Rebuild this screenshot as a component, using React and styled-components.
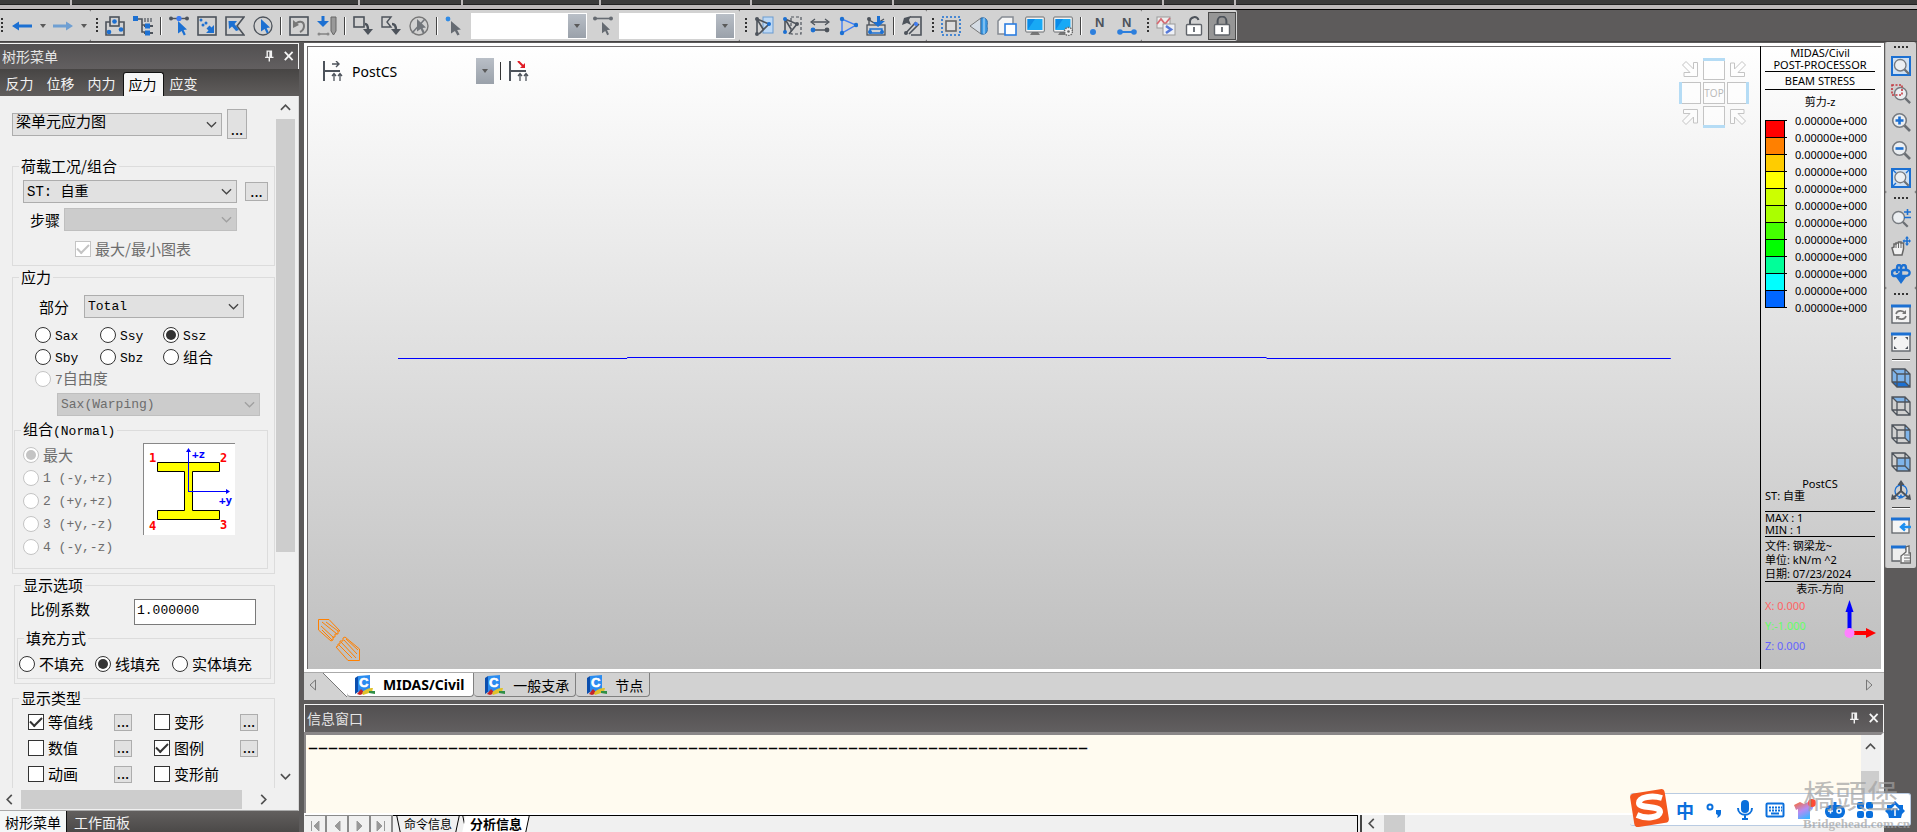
import { useState } from "react"
import styled, { createGlobalStyle } from "styled-components"

const GREY = "#4d535b"
const BLUE = "#1c70d2"
const SKY = "#7fb4ea"

const line = { fill: "none", stroke: GREY, strokeWidth: 1.6 }
const blueLine = { fill: "none", stroke: BLUE, strokeWidth: 1.6 }
const CURSOR = "M0 0L9 8.5L5.6 9L7.8 13.6L5.8 14.6L3.6 10L0 12.4Z"

const Magnifier = ({ children }) => (
  <>
    <path d="M13 13L19 19" stroke="#6b6f74" strokeWidth="2.6" />
    <circle cx="8.5" cy="8.5" r="6.8" fill="#eceff2" stroke="#777b80" strokeWidth="1.6" />
    {children}
  </>
)

const Cube = ({ children }) => (
  <>
    {children}
    <path d="M1 1H14L19 6V19H6L1 14ZM1 1L6 6M6 6H19M6 6V19M14 1V14H1M14 14L19 19" {...line} strokeWidth="1.3" />
  </>
)

const Monitor = () => (
  <>
    <path d="M7 16H13L15 19H5Z" fill="#777" />
    <rect x="0.7" y="1" width="18.6" height="15" rx="1" fill="#f4f4f4" stroke="#6a6d70" />
    <rect x="2.5" y="3" width="15" height="11" fill="#18a9f5" />
    <path d="M2.5 14V3H10Z" fill="#0b8be8" />
  </>
)

const Lock = ({ open }) => (
  <>
    <path d={open ? "M6 9V5A4.4 4.4 0 0 1 14.5 4" : "M5.6 9V5A4.4 4.4 0 0 1 14.4 5V9"} {...line} strokeWidth="2" />
    <rect x="2.5" y="8.5" width="15" height="10.5" rx="1" fill="#fff" stroke="#60646a" strokeWidth="1.4" />
    <path d="M10 11V16" stroke={GREY} strokeWidth="1.6" />
  </>
)

const Nodes = ({ dots, r = 2 }) => dots.map(([x, y, color = BLUE]) => (
  <circle key={`${x}-${y}`} cx={x} cy={y} r={r} fill={color} />
))

const ICONS = {
  back: <path d="M0 10L7 5.5V8.6H20V11.4H7V14.5Z" fill={BLUE} />,
  forward: <path d="M20 10L13 5.5V8.6H0V11.4H13V14.5Z" fill="#6f9fd2" />,
  group: (
    <>
      <path d="M5 6H1V19H19V6H14" {...line} />
      <rect x="5" y="1" width="9" height="9" {...line} />
      <Nodes dots={[[9.5, 5.5], [4, 16], [16, 13.5]]} r={2.3} />
    </>
  ),
  tree: (
    <>
      <path d="M3 3H9V16H13M9 9H13" {...line} />
      <rect width="5" height="5" fill={BLUE} />
      <path d="M12 2V6M15 2V6M18 2V6" stroke={GREY} strokeWidth="1.2" />
      <path d="M11 10H20M11 17H20" stroke={GREY} strokeWidth="2" />
      <rect x="12" y="7.5" width="5" height="5" fill={BLUE} />
      <rect x="12" y="14.5" width="5" height="5" fill={BLUE} />
    </>
  ),
  selectNode: (
    <>
      <path d="M2 2.5H18" stroke={GREY} strokeWidth="1.4" />
      <Nodes dots={[[2, 2.5, GREY], [18, 2.5, GREY]]} />
      <circle cx="10" cy="2.5" r="2.6" fill="#3c7cf5" />
      <path d={CURSOR} transform="translate(9 5)" fill={BLUE} />
    </>
  ),
  selectWindow: (
    <>
      <rect x="1" y="1" width="18" height="18" {...line} />
      <Nodes dots={[[4, 4], [9, 7], [6, 9]]} r={1.5} />
      <path d="M17 17H9L11.5 14.5L9.5 12.5L12.5 9.5L14.5 11.5L17 9Z" fill={BLUE} />
    </>
  ),
  selectPolygon: (
    <>
      <path d="M19 1H1V19H19L12 10Z" {...line} />
      <path d="M3.5 5H12L9.5 8L14 14L11 15L7 10.5L4 13Z" fill={BLUE} />
    </>
  ),
  selectCircle: (
    <>
      <circle cx="10" cy="10" r="9" {...line} strokeWidth="1.3" />
      <path d={CURSOR} transform="translate(8 3)" fill={BLUE} />
    </>
  ),
  undoSelect: (
    <>
      <rect x="1" y="1" width="18" height="18" {...line} />
      <path d="M6 9C9 4 15 5 15 10C15 13 13 15 11 16" {...line} stroke="#777" strokeWidth="2" />
      <path d="M4 4L4 12L10 9Z" fill="#777" />
    </>
  ),
  recallSelect: (
    <>
      <path d="M6 0V7" stroke={BLUE} strokeWidth="3" />
      <path d="M0 5H12L6 11Z" fill={BLUE} />
      <path d="M2 18H11" stroke="#888" strokeWidth="1.6" />
      <Nodes dots={[[2, 18, "#888"], [11, 18, "#888"]]} r={1.5} />
      <path d="M14 1H19V15L16.5 19L14 15Z" fill="#999" stroke="#666" />
    </>
  ),
  unselectWindow: (
    <>
      <rect x="1" y="1" width="10" height="10" {...line} />
      <path d="M12 8C15 8 15 11 15 14" {...line} strokeWidth="2.4" />
      <path d="M10 13H20L15 19Z" fill={GREY} />
    </>
  ),
  unselectPolygon: (
    <>
      <path d="M10 1H1V11H10L6 6Z" {...line} strokeWidth="1.4" />
      <path d="M11 8C14 8 15 10 15 14" {...line} strokeWidth="2.4" />
      <path d="M10 13H20L15 19Z" fill={GREY} />
    </>
  ),
  unselectAll: (
    <>
      <circle cx="10" cy="10" r="9" {...line} stroke="#777" strokeWidth="1.4" />
      <path d={CURSOR} transform="translate(8 3)" fill="#72767b" />
      <path d="M3 17L16 3" stroke="#72767b" strokeWidth="1.6" />
    </>
  ),
  pickNode: (
    <>
      <circle cx="3" cy="3" r="2.4" fill="#2f8be6" />
      <path d={CURSOR} transform="translate(6 5) scale(1.1 1)" fill="#666b72" />
    </>
  ),
  pickElement: (
    <>
      <path d="M2 2.5H18" stroke="#666b72" strokeWidth="1.6" />
      <Nodes dots={[[2, 2.5, "#666b72"], [18, 2.5, "#666b72"]]} />
      <path d={CURSOR} transform="translate(9 6) scale(.9)" fill="#666b72" />
    </>
  ),
  activate: (
    <>
      <rect x="9" y="1" width="10" height="16" fill="#bcd8f5" stroke="#6a9bd0" />
      <path d="M3 18V3L15 8L5 18M3 3L9 13" {...line} />
      <Nodes dots={[[3, 3, GREY], [3, 18, GREY], [15, 8]]} />
    </>
  ),
  inactivate: (
    <>
      <rect x="9" y="1" width="10" height="17" {...line} strokeWidth="1.2" strokeDasharray="3 2" />
      <path d="M3 16V3L15 8L7 18M3 3L9 13" {...line} />
      <Nodes dots={[[3, 3], [3, 16], [15, 8, GREY]]} />
    </>
  ),
  swap: (
    <>
      <path d="M2 6H18M2 14H18" {...line} />
      <path d="M15 3L19 6L15 9M5 3L1 6L5 9" {...line} strokeWidth="1.2" />
      <Nodes dots={[[3, 14], [17, 14, GREY]]} r={2.4} />
    </>
  ),
  activateAll: (
    <>
      <path d="M4 3V17L18 9Z" {...blueLine} stroke="#3e7df5" strokeWidth="1.4" />
      <Nodes dots={[[4, 3], [4, 17], [18, 9]]} r={2.2} />
    </>
  ),
  activateStory: (
    <>
      <rect x="1" y="9" width="18" height="10" {...line} strokeWidth="1.3" />
      <path d="M3 9V4L10 8L18 3" {...line} strokeWidth="1.4" />
      <path d="M4 13V17H16V13Z" {...blueLine} strokeWidth="1.4" />
      <path d="M11 0H14V5H19L12 11L7 6H11Z" fill={BLUE} />
      <Nodes dots={[[3, 3, GREY], [4, 16], [16, 16]]} />
    </>
  ),
  previous: (
    <>
      <path d="M8 1H19V19H9" {...line} />
      <path d="M3 18L14 6M7 18L17 8" {...line} />
      <path d="M0 9L2 2L9 0L7 4L9 9L5 7Z" fill={GREY} />
      <Nodes dots={[[4, 17, GREY], [14, 8, "#3e7df5"]]} />
    </>
  ),
  shrink: (
    <>
      <rect x="1" y="1" width="18" height="18" {...blueLine} strokeDasharray="2 2" />
      <rect x="5" y="5" width="10" height="10" fill="#ddd" stroke="#666" strokeWidth="1.6" />
    </>
  ),
  perspective: (
    <>
      <path d="M1 10L12 2V18Z" fill="#d5dce4" stroke="#777" />
      <path d="M12 2C18 1 19 5 18 10C19 15 18 19 12 18Z" fill="#3b9be6" stroke="#2e6ca8" />
      <path d="M15 2V18" stroke="#bfe0fb" />
    </>
  ),
  hidden: (
    <>
      <path d="M1 5L5 1H16V14L13 18H1Z" fill="#f5f5f5" stroke="#858b92" strokeWidth="1.5" />
      <rect x="8" y="8" width="11" height="11" fill="#fff" stroke="#2c7de0" strokeWidth="1.6" />
    </>
  ),
  display: <Monitor />,
  displayOption: (
    <>
      <Monitor />
      <circle cx="15.5" cy="15.5" r="4" fill="#eee" stroke="#666" strokeWidth="1.5" strokeDasharray="1.5 1" />
      <circle cx="15.5" cy="15.5" r="1.3" fill="#666" />
    </>
  ),
  nodeNumber: (
    <>
      <text x="6" y="11" fontSize="13" fontWeight="bold" fontFamily="Liberation Sans" fill={GREY}>N</text>
      <circle cx="4" cy="16" r="3" fill="#2d7fdd" />
    </>
  ),
  elementNumber: (
    <>
      <text x="5" y="11" fontSize="13" fontWeight="bold" fontFamily="Liberation Sans" fill={GREY}>N</text>
      <path d="M3 16H17" stroke="#2d7fdd" strokeWidth="2" />
      <Nodes dots={[[3, 16, "#2d7fdd"], [17, 16, "#2d7fdd"]]} r={2.8} />
    </>
  ),
  resultMode: (
    <>
      <rect x="1" y="1" width="13" height="11" fill="#eee" stroke="#999" />
      <path d="M1 8L5 3L9 8L14 2" fill="none" stroke="#d66a72" strokeWidth="1.8" />
      <rect x="7" y="8" width="12" height="11" fill="#eef0f6" stroke="#999" />
      <path d="M10 10L15 13.5L10 17" fill="none" stroke="#5679d8" strokeWidth="2.6" />
    </>
  ),
  unlock: <Lock open />,
  lock: <Lock />,
  zoomFit: (
    <>
      <rect x="1" y="1" width="18" height="18" fill="#cfe0f2" stroke={BLUE} strokeWidth="2" />
      <g transform="translate(2 2) scale(.85)"><Magnifier /></g>
    </>
  ),
  zoomWindow: (
    <>
      <g transform="translate(2 2) scale(.9)"><Magnifier /></g>
      <rect x="1" y="1" width="10" height="10" fill="none" stroke="#c33a40" strokeWidth="1.6" strokeDasharray="2 1.5" />
    </>
  ),
  zoomIn: <Magnifier><path d="M4.5 8.5H12.5M8.5 4.5V12.5" stroke={BLUE} strokeWidth="2.6" /></Magnifier>,
  zoomOut: <Magnifier><path d="M4.5 8.5H12.5" stroke={BLUE} strokeWidth="2.6" /></Magnifier>,
  zoomAuto: (
    <>
      <rect x="1" y="1" width="18" height="18" fill="#cfe0f2" stroke={BLUE} strokeWidth="2" />
      <path d="M2 2L5 5M18 2L15 5M2 18L5 15" stroke={BLUE} strokeWidth="1.4" />
      <g transform="translate(2.5 2.5) scale(.8)"><Magnifier /></g>
    </>
  ),
  zoomDynamic: (
    <>
      <g transform="translate(0 2) scale(.88)"><Magnifier /></g>
      <path d="M13 4H20M16.5 1V7M13 9.5H20" stroke={BLUE} strokeWidth="1.6" />
    </>
  ),
  pan: (
    <>
      <path d="M3 19L1 12L3 11V8H5V7H7.5V6H10V7H12.5V13L11 19Z" fill="#f2f2f2" stroke="#666" strokeWidth="1.5" />
      <path d="M5 8V12M7.5 7V12M10 7V12" stroke="#666" />
      <path d="M16 0L18 2.5H16.8V4.2H18V3L20 5L18 7V5.8H16.8V7.5H18L16 10L14 7.5H15.2V5.8H13.5V7L11.5 5L13.5 3V4.2H15.2V2.5H14Z" fill={BLUE} />
    </>
  ),
  rotate: (
    <>
      <path d="M3 6H15C20 6 20 12 14 12H8M6 12H4C0 12 0 6 4 6" {...blueLine} strokeWidth="2.4" />
      <path d="M6 9V4C6 0 10 0 10 4V14M10 4C11 0 15 0 15 4V7" {...blueLine} strokeWidth="2.4" />
      <path d="M5 13H15L10 20ZM9 8V16L4 12Z" fill={BLUE} />
    </>
  ),
  redraw: (
    <>
      <rect x="1" y="2" width="18" height="17" fill="#f3f3f3" stroke="#62666b" strokeWidth="1.4" />
      <path d="M0 2H20" stroke={BLUE} strokeWidth="3" />
      <path d="M5 10C6 6 12 6 14 9M15 12C14 16 8 16 6 13" {...line} stroke="#777" />
      <path d="M15 6V10H11ZM5 16V12H9Z" fill="#777" />
    </>
  ),
  initialView: (
    <>
      <rect x="1" y="2" width="18" height="17" fill="#f3f3f3" stroke="#62666b" strokeWidth="1.4" />
      <path d="M0 2H20" stroke={BLUE} strokeWidth="3" />
      <path d="M3 5H6L3 8ZM14 5H17V8ZM3 14V17H6ZM17 14V17H14Z" fill={GREY} />
    </>
  ),
  iso: <Cube><path d="M1 1H14L19 6V19H6L1 14Z" fill={SKY} /><path d="M1 14L6 19H19L14 14Z" fill={BLUE} /></Cube>,
  top: <Cube><path d="M1 1H14L19 6H6Z" fill={SKY} /></Cube>,
  right: <Cube><path d="M14 1L19 6V19L14 14Z" fill={SKY} /></Cube>,
  front: <Cube><rect x="6" y="6" width="13" height="13" fill={SKY} /></Cube>,
  angle: (
    <>
      <circle cx="10" cy="11" r="6" {...blueLine} strokeWidth="1.3" />
      <path d="M10 2V11L2 18M10 11L18 18" {...line} strokeWidth="2" />
      <path d="M6.5 5L10 0L13.5 5ZM0 20L1 14L6 19ZM20 20L19 14L14 19Z" fill={GREY} />
      <path d="M7 19L10 14L12 18Z" fill={BLUE} />
    </>
  ),
  dockWindow: (
    <>
      <rect x="1" y="3" width="17" height="14" fill="#f5f5f5" stroke="#62666b" strokeWidth="1.3" />
      <path d="M0 3H19" stroke={BLUE} strokeWidth="3" />
      <path d="M20 11H11M14 7.5L10 11L14 14.5" fill="none" stroke="#1c8ff0" strokeWidth="2.4" />
    </>
  ),
  handWindow: (
    <>
      <path d="M9 17H1V3H15V6" fill="#eee" stroke="#62666b" strokeWidth="1.3" />
      <path d="M0 3H15" stroke={BLUE} strokeWidth="3" />
      <path d="M10 19V12L15 8V3L18 2V9H19.5V19Z" fill="#f5f5f5" stroke="#666" strokeWidth="1.3" />
      <path d="M13 11H19M13 14H19M13 17H19" stroke="#666" />
    </>
  ),
  stage: (
    <>
      <path d="M1 0V20M1 10H17" {...line} strokeWidth="2" />
      <path d="M9 3H16M13 0L16 3L13 6" {...line} strokeWidth="1.4" />
      <path d="M11 13V20M17 13V20M9 15L11 12.5L13 15M15 15L17 12.5L19 15" {...line} strokeWidth="1.3" />
    </>
  ),
  stageAlt: (
    <>
      <path d="M1 0V20M1 10H17" {...line} strokeWidth="2" />
      <path d="M9 0L15 6" stroke="#e01b24" strokeWidth="2" />
      <path d="M16 2V7H11Z" fill="#e01b24" />
      <path d="M11 13V20M17 13V20M9 15L11 12.5L13 15M15 15L17 12.5L19 15" {...line} strokeWidth="1.3" />
    </>
  ),
  civil: (
    <>
      <path d="M3 1L15 0V15L3 17Z" fill="#2b8cf0" />
      <path d="M3 1V17L0 19V3Z" fill="#0b4fae" />
      <text x="4" y="12" fontSize="13" fontWeight="bold" fontFamily="Liberation Sans" fill="#fff" stroke="#fff" strokeWidth=".6">C</text>
      <path d="M2 19L6 14L10 18L5 20Z" fill="#c5242a" />
      <path d="M7 18C10 14 14 13 18 13L17 17L8 20Z" fill="#e0c22c" />
      <path d="M14 16L20 16V19L14 18Z" fill="#2f8f46" />
    </>
  ),
  pin: <path d="M5 2H13V11H15V13H10V18H8V13H3V11H5ZM7 4V11H9V4Z" fill="#f2f2f2" fillRule="evenodd" />,
  close: <path d="M3 3L16 17M16 3L3 17" stroke="#f4f4f4" strokeWidth="3" />,
}

const Icon = ({ name, size = 20 }) => (
  <svg width={size} height={size} viewBox="0 0 20 20" aria-hidden="true">{ICONS[name]}</svg>
)

const Chevron = ({ dir = "down", color = "#505050", size = 11, weight = 1.8 }) => {
  const turn = { down: 0, left: 90, up: 180, right: 270 }[dir]
  return (
    <svg width={size} height={size} viewBox="0 0 12 12" aria-hidden="true">
      <path d="M1 3.5L6 8.5L11 3.5" fill="none" stroke={color} strokeWidth={weight} transform={`rotate(${turn} 6 6)`} />
    </svg>
  )
}

const SEP = "|"
const SELECT_TOOLS = [
  "group", "tree", SEP, "selectNode", "selectWindow", "selectPolygon", "selectCircle", SEP,
  "undoSelect", "recallSelect", SEP, "unselectWindow", "unselectPolygon", "unselectAll", SEP,
]
const ACTIVE_TOOLS = ["activate", "inactivate", "swap", "activateAll", "activateStory", SEP, "previous"]
const VIEW_TOOLS = ["shrink", "perspective", "hidden", "display", "displayOption", SEP, "nodeNumber", "elementNumber"]
const SIDE_TOOLS = [
  ["zoomFit", "zoomWindow", "zoomIn", "zoomOut", "zoomAuto"],
  ["zoomDynamic", "pan", "rotate"],
  ["redraw", "initialView", SEP, "iso", "top", "right", "front", "angle", SEP, "dockWindow", "handWindow"],
]
const RIBBON_GROUPS = [70, 286, 101, 136, 149, 140, 268, 70, 69]
const CONTOUR_COLORS = [
  "#ff0000", "#ff8000", "#ffcc00", "#ffff00", "#ccff00", "#aaff00",
  "#44ff00", "#00ff00", "#00ff99", "#00ffff", "#0066ff",
]

const Tools = ({ items }) => items.map((item, i) => (
  item === SEP
    ? <Separator key={i} />
    : <ToolButton key={i} type="button" aria-label={item}><Icon name={item} /></ToolButton>
))

const Select = ({ label, options, width, disabled, size = 13 }) => (
  <SelectBox $width={width}>
    <NativeSelect aria-label={label} disabled={disabled} $size={size}>
      {options.map(option => <option key={option}>{option}</option>)}
    </NativeSelect>
    <Chevron color={disabled ? "#a0a0a0" : "#444"} weight={1.4} />
  </SelectBox>
)

const Choice = ({ type, name, label, latin, checked, disabled }) => (
  <ChoiceLabel $disabled={disabled}>
    <ChoiceInput type={type} name={name} defaultChecked={checked} disabled={disabled} />
    <span>{latin && <Latin>{latin}</Latin>}{label}</span>
  </ChoiceLabel>
)

const SectionDiagram = () => (
  <Diagram viewBox="0 0 92 92" role="img" aria-label="I section">
    <path d="M0 92V0H92" fill="none" stroke="#888" strokeWidth="2" />
    <path d="M14.5 19.5H76.5V28.5H49.5V67.5H76.5V76.5H14.5V67.5H41.5V28.5H14.5Z" fill="#ff0" stroke="#000" />
    <path d="M45.5 49V7M45 48.5H86" stroke="#00f" />
    <path d="M43 9L45.5 5L48 9ZM83 46L87 48.5L83 51Z" fill="#00f" />
    <g fontFamily="DejaVu Sans Mono" fontSize="12" fontWeight="bold">
      <g fill="#f00">
        <text x="6" y="19">1</text>
        <text x="77" y="19">2</text>
        <text x="77" y="86">3</text>
        <text x="6" y="87">4</text>
      </g>
      <g fill="#00f" fontSize="11">
        <text x="49" y="15">+z</text>
        <text x="76" y="61">+y</text>
      </g>
    </g>
  </Diagram>
)

const TreePanel = () => {
  const [tab, setTab] = useState("应力")
  return (
    <Panel>
      <PanelHeader>
        <h2>树形菜单</h2>
        <CaptionButton type="button" aria-label="固定"><Icon name="pin" size={14} /></CaptionButton>
        <CaptionButton type="button" aria-label="关闭"><Icon name="close" size={12} /></CaptionButton>
      </PanelHeader>
      <PanelTabs>
        {["反力", "位移", "内力", "应力", "应变"].map(name => (
          <PanelTab key={name} type="button" $active={name === tab} onClick={() => setTab(name)}>{name}</PanelTab>
        ))}
      </PanelTabs>
      <PanelBody>
        <Form>
          <Row $left={12} $gap={5}>
            <Select label="图形类型" options={["梁单元应力图"]} width={210} size={15} />
            <MoreButton type="button" $w={20} $h={30}>...</MoreButton>
          </Row>

          <Group $top={17} $bottom={5}>
            <legend>荷载工况/组合</legend>
            <Row $top={4} $left={10} $gap={8}>
              <Select label="荷载工况" options={["ST: 自重"]} width={214} size={14} />
              <MoreButton type="button" $w={23} $h={19}>...</MoreButton>
            </Row>
            <Row $top={5} $left={17} $gap={4}>
              <span>步骤</span>
              <Select label="步骤" options={[""]} width={173} disabled />
            </Row>
            <Row $top={7} $left={62}>
              <Choice type="checkbox" label="最大/最小图表" checked disabled />
            </Row>
          </Group>

          <Group $top={1} $bottom={4}>
            <legend>应力</legend>
            <Row $top={8} $left={26} $gap={15}>
              <span>部分</span>
              <Select label="部分" options={["Total"]} width={160} />
            </Row>
            <ChoiceGrid $columns="65px 63px auto" $top={6}>
              <Choice type="radio" name="part" latin="Sax" />
              <Choice type="radio" name="part" latin="Ssy" />
              <Choice type="radio" name="part" latin="Ssz" checked />
              <Choice type="radio" name="part" latin="Sby" />
              <Choice type="radio" name="part" latin="Sbz" />
              <Choice type="radio" name="part" label="组合" />
              <Choice type="radio" name="part" latin="7" label="自由度" disabled />
            </ChoiceGrid>
            <Row $top={3} $left={44}>
              <Select label="自由度" options={["Sax(Warping)"]} width={203} disabled />
            </Row>
            <Group $top={3} $left={1} $right={6} $bottom={10}>
              <legend>组合<Latin>(Normal)</Latin></legend>
              <CornerRow>
                <CornerList>
                  <Choice type="radio" name="corner" label="最大" checked disabled />
                  <Choice type="radio" name="corner" latin="1 (-y,+z)" disabled />
                  <Choice type="radio" name="corner" latin="2 (+y,+z)" disabled />
                  <Choice type="radio" name="corner" latin="3 (+y,-z)" disabled />
                  <Choice type="radio" name="corner" latin="4 (-y,-z)" disabled />
                </CornerList>
                <SectionDiagram />
              </CornerRow>
            </Group>
          </Group>

          <Group $top={1} $left={14} $bottom={4}>
            <legend>显示选项</legend>
            <ScaleRow>
              <label htmlFor="scale">比例系数</label>
              <TextInput id="scale" defaultValue="1.000000" />
            </ScaleRow>
            <Group $top={3} $left={2} $right={3} $bottom={3}>
              <legend>填充方式</legend>
              <ChoiceGrid $columns="76px 77px auto" $top={5} $left={1}>
                <Choice type="radio" name="fill" label="不填充" />
                <Choice type="radio" name="fill" label="线填充" checked />
                <Choice type="radio" name="fill" label="实体填充" />
              </ChoiceGrid>
            </Group>
          </Group>

          <Group $top={4} $bottom={20}>
            <legend>显示类型</legend>
            <TypeGrid>
              <Choice type="checkbox" label="等值线" checked />
              <MoreButton type="button" $w={18} $h={17}>...</MoreButton>
              <Choice type="checkbox" label="变形" />
              <MoreButton type="button" $w={18} $h={17}>...</MoreButton>
              <Choice type="checkbox" label="数值" />
              <MoreButton type="button" $w={18} $h={17}>...</MoreButton>
              <Choice type="checkbox" label="图例" checked />
              <MoreButton type="button" $w={18} $h={17}>...</MoreButton>
              <Choice type="checkbox" label="动画" />
              <MoreButton type="button" $w={18} $h={17}>...</MoreButton>
              <Choice type="checkbox" label="变形前" />
            </TypeGrid>
          </Group>
        </Form>
        <VScroll>
          <Chevron dir="up" />
          <VTrack><Thumb $size="67%" /></VTrack>
          <Chevron />
        </VScroll>
        <HScroll>
          <Chevron dir="left" />
          <Thumb $horizontal $size="100%" />
          <Chevron dir="right" />
        </HScroll>
      </PanelBody>
      <BottomTabs>
        <BottomTab type="button" $active>树形菜单</BottomTab>
        <BottomTab type="button">工作面板</BottomTab>
      </BottomTabs>
    </Panel>
  )
}

const ViewCube = () => (
  <CubeSvg viewBox="0 0 70 70" fill="rgba(255,255,255,.5)" stroke="#c4c4c4">
    <rect x="24.5" y="1.5" width="21" height="20" />
    <rect x="24.5" y="24.5" width="21" height="21" />
    <rect x="1.5" y="24.5" width="20" height="21" />
    <rect x="48.5" y="24.5" width="20" height="21" />
    <rect x="24.5" y="48.5" width="21" height="20" />
    <path d="M24 1.5H46M24 68.5H46M1.5 24V46M68.5 24V46" stroke="#b5dcf5" strokeWidth="3" />
    {[0, 90, 180, 270].map(angle => (
      <path key={angle} d="M3.5 7L11 14.5H5V18.5H18.5V4.5H14.5V11L7 3.5Z" transform={`rotate(${angle} 35 35)`} />
    ))}
    <text x="35" y="39" fontSize="10" fontFamily="Open Sans" textAnchor="middle" fill="#b8b8b8" stroke="none">TOP</text>
  </CubeSvg>
)

const Legend = () => (
  <LegendBox>
    <Center>MIDAS/Civil<br />POST-PROCESSOR</Center>
    <Rule />
    <LegendTitle>BEAM STRESS</LegendTitle>
    <Rule />
    <LegendSub>剪力-z</LegendSub>
    <Scale>
      <ColorBar>
        {CONTOUR_COLORS.map(color => <Swatch key={color} $color={color} />)}
      </ColorBar>
      <ScaleValues>
        {[...CONTOUR_COLORS, "end"].map(key => <li key={key}>0.00000e+000</li>)}
      </ScaleValues>
    </Scale>
    <Summary>
      <Center>PostCS</Center>
      <div>ST: 自重</div>
    </Summary>
    <Rule />
    <div>MAX : 1<br />MIN : 1</div>
    <Rule />
    <FileInfo>文件: 钢梁龙~<br />单位: kN/m ^2<br />日期: 07/23/2024</FileInfo>
    <Rule />
    <DirectionTitle>表示-方向</DirectionTitle>
    <Direction>
      <div>
        <Axis $color="#ff6464">X: 0.000</Axis>
        <Axis $color="#64ff64">Y:-1.000</Axis>
        <Axis $color="#6464ff">Z: 0.000</Axis>
      </div>
      <svg width="32" height="40" viewBox="0 0 32 40" aria-hidden="true">
        <path d="M5.5 32V10" stroke="#00f" strokeWidth="4" />
        <path d="M1.5 12L5.5 0L9.5 12Z" fill="#00f" />
        <path d="M8 33H24" stroke="#f00" strokeWidth="4" />
        <path d="M22 28L32 33L22 38Z" fill="#f00" />
        <circle cx="5.5" cy="33" r="5" fill="#ff80ff" />
      </svg>
    </Direction>
  </LegendBox>
)

const ModelView = () => (
  <ViewFrame>
    <Canvas>
      <StageBar>
        <Icon name="stage" />
        <StageSelect>
          <select aria-label="施工阶段"><option>PostCS</option></select>
          <Caret />
        </StageSelect>
        <StageDivider />
        <Icon name="stageAlt" />
      </StageBar>
      <Beam viewBox="0 0 1272 4" preserveAspectRatio="none">
        <path d="M0 1.5H229M868 1.5H1272" stroke="#00f" vectorEffect="non-scaling-stroke" />
        <path d="M229 .5H868" stroke="#00f" vectorEffect="non-scaling-stroke" />
      </Beam>
      <ViewCube />
      <CutMark viewBox="0 0 42 42" fill="none" stroke="#ff8000">
        <path d="M22 12L20 12V15H17V18H15V21L13 22L.5 11V.5H11L22 12M4 3L19 15M3 7L16 19M8 3L20 12M4 11L14 21" />
        <path d="M27 18L25 19V22H22V25H20V27L18 28L30 41.5H41.5V30L27 18M23 23L38 39M26 21L39 35M21 26L34 39M28 20L40 31" />
      </CutMark>
    </Canvas>
    <Legend />
  </ViewFrame>
)

const DocTabs = () => (
  <DocBar>
    <ScrollArrow type="button" aria-label="上一个">
      <svg width="8" height="12"><path d="M6.5 1V11L1 6Z" fill="none" stroke="#777" /></svg>
    </ScrollArrow>
    <DocSlant />
    <DocTab type="button" $active><Icon name="civil" />MIDAS/Civil</DocTab>
    <DocTab type="button"><Icon name="civil" />一般支承</DocTab>
    <DocTab type="button"><Icon name="civil" />节点</DocTab>
    <ScrollArrow type="button" aria-label="下一个" $end>
      <svg width="8" height="12"><path d="M1.5 1V11L7 6Z" fill="none" stroke="#777" /></svg>
    </ScrollArrow>
  </DocBar>
)

const NAV = ["M2.5 1V11M10 1V11L5 6Z", "M9 1V11L4 6Z", "M4 1V11L9 6Z", "M2 1V11L7 6ZM9.5 1V11"]

const InfoWindow = () => (
  <Info>
    <PanelHeader $flush>
      <h2>信息窗口</h2>
      <CaptionButton type="button" aria-label="固定"><Icon name="pin" size={14} /></CaptionButton>
      <CaptionButton type="button" aria-label="关闭"><Icon name="close" size={12} /></CaptionButton>
    </PanelHeader>
    <InfoBody>
      <Output>{"–".repeat(78)}</Output>
      <InfoScroll>
        <Chevron dir="up" />
        <InfoThumb />
      </InfoScroll>
    </InfoBody>
    <SheetBar>
      {NAV.map(d => (
        <NavButton key={d} type="button" aria-label="翻页">
          <svg width="12" height="12"><path d={d} fill="#999" stroke="#999" /></svg>
        </NavButton>
      ))}
      <SheetTabs>
        <SheetTab type="button">命令信息</SheetTab>
        <SheetTab type="button" $active>分析信息</SheetTab>
      </SheetTabs>
      <SheetScroll>
        <Chevron dir="left" />
        <SheetThumb />
      </SheetScroll>
    </SheetBar>
  </Info>
)

const ImeBar = () => (
  <Ime>
    <svg width="40" height="40" viewBox="0 0 40 40" aria-hidden="true">
      <rect x="2" y="3" width="35" height="34" rx="4" fill="#f4571f" transform="rotate(-9 20 20)" />
      <path d="M32 10C22 7 9 9 9 15C9 21 30 17 30 24C29 30 16 31 7 27" fill="none" stroke="#fff" strokeWidth="6" />
    </svg>
    <ImeButton type="button">中</ImeButton>
    <ImeButton type="button" aria-label="标点">
      <svg width="20" height="20">
        <circle cx="5" cy="7" r="2.5" fill="none" stroke="#0a6fdc" strokeWidth="2" />
        <path d="M11 10H16V13C16 16 14 17 12 18C13 16 13 15 12 14.5L11 14Z" fill="#0a6fdc" />
      </svg>
    </ImeButton>
    <ImeButton type="button" aria-label="语音">
      <svg width="20" height="20">
        <rect x="6" y="0" width="8" height="13" rx="4" fill="#0a6fdc" />
        <path d="M3 8C3 17 17 17 17 8M10 15V19M7 19H13" fill="none" stroke="#0a6fdc" strokeWidth="2" />
      </svg>
    </ImeButton>
    <ImeButton type="button" aria-label="键盘">
      <svg width="20" height="20">
        <rect x="1.5" y="3.5" width="17" height="13" rx="1" fill="none" stroke="#0a6fdc" strokeWidth="2" />
        <path d="M4 7.5H17M4 10.5H17" stroke="#0a6fdc" strokeWidth="2" strokeDasharray="2 1" />
        <path d="M6 13.5H14" stroke="#0a6fdc" strokeWidth="2" />
      </svg>
    </ImeButton>
    <ImeButton type="button" aria-label="皮肤">
      <svg width="22" height="22" viewBox="0 0 22 22">
        <defs>
          <linearGradient id="shirt" x1="0" y1="0" x2=".6" y2="1">
            <stop offset="0" stopColor="#ff6a2b" />
            <stop offset=".55" stopColor="#b58cf5" />
            <stop offset="1" stopColor="#3db4ff" />
          </linearGradient>
        </defs>
        <path d="M6 3L10 5L14 3L20 6L18 11L16 10V20H4V10L2 11L0 6Z" fill="url(#shirt)" />
        <circle cx="18" cy="4" r="4" fill="#ff4b33" />
      </svg>
    </ImeButton>
    <ImeButton type="button" aria-label="游戏">
      <svg width="20" height="20">
        <rect x="0" y="5" width="20" height="13" rx="6" fill="#0a6fdc" />
        <path d="M10 2V6" stroke="#0a6fdc" strokeWidth="3" />
        <path d="M3 11H8M5.5 8.5V13.5" stroke="#fff" strokeWidth="1.5" />
        <circle cx="14" cy="11" r="2" fill="none" stroke="#fff" strokeWidth="1.5" />
      </svg>
    </ImeButton>
    <ImeButton type="button" aria-label="工具箱">
      <svg width="20" height="20" fill="#0a6fdc">
        <rect x="2" y="2" width="7" height="7" rx="2" />
        <rect x="11" y="2" width="7" height="7" rx="2" />
        <rect x="2" y="11" width="7" height="7" rx="2" />
        <rect x="11" y="11" width="7" height="7" rx="2" />
      </svg>
    </ImeButton>
    <ImeButton type="button" aria-label="设置">
      <svg width="20" height="20">
        <path d="M10 1L14 5L18 5V9L20 11L17 14L16 18H4L3 14L0 11L2 9V5L6 5Z" fill="#0a6fdc" />
        <path d="M10 5V16M6 10L10 6L14 10" fill="none" stroke="#fff" strokeWidth="1.5" />
      </svg>
    </ImeButton>
    <Watermark>
      <strong>橋頭堡</strong>
      <span>Bridgehead.com.cn</span>
    </Watermark>
  </Ime>
)

const App = () => (
  <>
    <GlobalStyle />
    <Window>
      <Ribbon>
        {RIBBON_GROUPS.map((width, i) => <RibbonGroup key={i} $width={width} />)}
      </Ribbon>
      <Toolbar>
        <ToolGroup>
          <Grip />
          <ToolButton type="button" aria-label="撤销"><Icon name="back" /></ToolButton>
          <CaretButton type="button" aria-label="撤销列表"><Caret /></CaretButton>
          <ToolButton type="button" aria-label="重做"><Icon name="forward" /></ToolButton>
          <CaretButton type="button" aria-label="重做列表"><Caret /></CaretButton>
        </ToolGroup>
        <ToolGroup $end={3}>
          <Grip />
          <Tools items={SELECT_TOOLS} />
          <ToolButton type="button" aria-label="选择节点"><Icon name="pickNode" /></ToolButton>
          <Combo><input aria-label="节点号" /><ComboButton type="button" aria-label="展开"><Caret /></ComboButton></Combo>
          <ToolButton type="button" aria-label="选择单元"><Icon name="pickElement" /></ToolButton>
          <Combo><input aria-label="单元号" /><ComboButton type="button" aria-label="展开"><Caret /></ComboButton></Combo>
        </ToolGroup>
        <ToolGroup><Grip /><Tools items={ACTIVE_TOOLS} /></ToolGroup>
        <ToolGroup><Grip /><Tools items={VIEW_TOOLS} /></ToolGroup>
        <ToolGroup>
          <Grip />
          <Tools items={["resultMode", "unlock"]} />
          <ToolButton type="button" aria-label="锁定" $pressed><Icon name="lock" /></ToolButton>
        </ToolGroup>
      </Toolbar>
      <Workspace>
        <TreePanel />
        <Main>
          <ModelView />
          <DocTabs />
          <InfoWindow />
        </Main>
        <SideBar>
          {SIDE_TOOLS.map((items, i) => (
            <SideGroup key={i}>
              <SideGrip />
              {items.map((item, j) => (
                item === SEP
                  ? <SideSeparator key={j} />
                  : <SideButton key={j} type="button" aria-label={item}><Icon name={item} /></SideButton>
              ))}
            </SideGroup>
          ))}
        </SideBar>
      </Workspace>
      <ImeBar />
    </Window>
  </>
)
export default App

const GlobalStyle = createGlobalStyle`
  * {
    box-sizing: border-box;
  }
  body {
    margin: 0;
    background-color: #5d5b5b;
    font-family: "Open Sans", "Noto Sans CJK SC", sans-serif;
    font-size: 14px;
  }
  button, input, select {
    font: inherit;
    color: inherit;
  }
  button {
    padding: 0;
    border: 0;
    background: none;
  }
  svg {
    display: block;
    flex-shrink: 0;
  }
`
const Window = styled.div`
  position: relative;
  height: 100vh;
  display: flex;
  flex-direction: column;
  overflow: hidden;
`
const Ribbon = styled.div`
  display: flex;
  gap: 2px;
  height: 10px;
  padding-bottom: 4px;
  background-color: #bdb9ba;
  border-bottom: 1px solid #000;
`
const RibbonGroup = styled.div`
  width: ${({ $width }) => $width}px;
  background-color: #3b3b3b;
  border-bottom: 1px solid #222;
  &:last-child {
    flex: 1;
  }
`
const Toolbar = styled.div`
  display: flex;
  height: 32px;
  border-bottom: 1px solid #454343;
`
const ToolGroup = styled.div`
  display: flex;
  align-items: center;
  padding-right: ${({ $end = 1 }) => $end}px;
  background-color: #d2d2d2;
  border-radius: 0 2px 2px 0;
`
const Grip = styled.span`
  width: 10px;
  height: 16px;
  background: repeating-linear-gradient(#333 0 2px, transparent 2px 4px) 5px 0 / 2px 100% no-repeat;
  ${ToolGroup}:first-child & {
    width: 8px;
    background-position: 1px 0;
  }
`
const ToolButton = styled.button`
  display: flex;
  align-items: center;
  justify-content: center;
  width: 28px;
  height: 28px;
  background-color: ${({ $pressed }) => $pressed ? "#969696" : "transparent"};
  border: ${({ $pressed }) => $pressed ? "1px solid #4a4a4a" : "0"};
`
const CaretButton = styled.button`
  width: 13px;
  height: 28px;
  display: flex;
  align-items: center;
  justify-content: center;
`
const Caret = styled.span`
  border: 3px solid transparent;
  border-top: 4px solid #5a5a5a;
  border-bottom: 0;
`
const Separator = styled.span`
  width: 8px;
  height: 18px;
  background: linear-gradient(90deg, transparent 3px, #444 3px 4px, #fff 4px 5px, transparent 5px);
`
const Combo = styled.div`
  display: flex;
  width: 116px;
  height: 26px;
  margin: 0 2px;
  padding: 1px;
  background-color: #fff;
  input {
    flex: 1;
    min-width: 0;
    border: 0;
    outline: 0;
  }
`
const ComboButton = styled.button`
  display: flex;
  align-items: center;
  justify-content: center;
  width: 18px;
  background: linear-gradient(#b9bfc7, #9aa1aa);
`
const Workspace = styled.div`
  flex: 1;
  min-height: 0;
  display: flex;
  padding-top: 1px;
`
const Panel = styled.section`
  width: 299px;
  margin-right: 5px;
  flex-shrink: 0;
  display: flex;
  flex-direction: column;
`
const PanelHeader = styled.header`
  display: flex;
  align-items: center;
  gap: 6px;
  height: ${({ $flush }) => $flush ? 28 : 26}px;
  flex-shrink: 0;
  padding: 0 3px 2px 2px;
  background: linear-gradient(#525051, #625f60);
  border-top: 1px solid #f4f4f4;
  border-right: 1px solid #f4f4f4;
  border-left: ${({ $flush }) => $flush ? "1px solid #f4f4f4" : "0"};
  color: #e6e6e6;
  h2 {
    flex: 1;
    margin: 0;
    font-size: 14px;
    font-weight: normal;
  }
`
const CaptionButton = styled.button`
  display: flex;
`
const PanelTabs = styled.div`
  display: flex;
  height: 27px;
  flex-shrink: 0;
  padding-top: 3px;
  background: linear-gradient(#474544, #605d5c);
`
const PanelTab = styled.button`
  width: 41px;
  padding-right: 2px;
  line-height: 24px;
  color: ${({ $active }) => $active ? "#000" : "#f2f2f2"};
  background-color: ${({ $active }) => $active ? "#f6f6f6" : "transparent"};
  border: ${({ $active }) => $active ? "1px solid #111" : "0"};
  border-width: 1px 1px 0;
  border-radius: 3px 3px 0 0;
`
const PanelBody = styled.div`
  flex: 1;
  min-height: 0;
  display: grid;
  grid-template: minmax(0, 1fr) 22px / 276px 1fr;
  background-color: #f0f0f0;
  border-right: 1px solid #d8d8d8;
  border-bottom: 1px solid #aaa;
`
const Form = styled.form`
  overflow: hidden;
  padding-top: 13px;
  font-family: "Noto Sans CJK SC", sans-serif;
  font-size: 15px;
  line-height: 20px;
  color: #000;
`
const Row = styled.div`
  display: flex;
  align-items: center;
  gap: ${({ $gap = 0 }) => $gap}px;
  margin-top: ${({ $top = 0 }) => $top}px;
  padding-left: ${({ $left = 0 }) => $left}px;
`
const Group = styled.fieldset`
  min-width: 0;
  margin: ${({ $top = 0, $right = 1, $left = 12 }) => `${$top}px ${$right}px 0 ${$left}px`};
  padding: 0 0 ${({ $bottom }) => $bottom}px;
  border: 1px solid #dcdcdc;
  > legend {
    margin-left: 6px;
    padding: 0 2px;
    line-height: 20px;
  }
`
const Latin = styled.span`
  font-family: "Liberation Mono", monospace;
  font-size: 13px;
`
const SelectBox = styled.div`
  position: relative;
  width: ${({ $width }) => $width}px;
  svg {
    position: absolute;
    right: 5px;
    top: 6px;
    pointer-events: none;
  }
`
const NativeSelect = styled.select`
  display: block;
  width: 100%;
  height: 23px;
  padding: 0 20px 0 3px;
  appearance: none;
  border: 1px solid #adadad;
  border-radius: 0;
  background-color: #e1e1e1;
  font-family: "Liberation Mono", "Noto Sans CJK SC", monospace;
  font-size: ${({ $size }) => $size}px;
  line-height: 20px;
  &:disabled {
    opacity: 1;
    color: #6d6d6d;
    background-color: #ccc;
    border-color: #bfbfbf;
  }
`
const MoreButton = styled.button`
  width: ${({ $w }) => $w}px;
  height: ${({ $h }) => $h}px;
  display: flex;
  align-items: flex-end;
  justify-content: center;
  background-color: #e1e1e1;
  border: 1px solid #adadad;
  line-height: 18px;
`
const ChoiceLabel = styled.label`
  display: flex;
  align-items: center;
  gap: 4px;
  height: 22px;
  white-space: pre;
  color: ${({ $disabled }) => $disabled ? "#6d6d6d" : "#000"};
`
const ChoiceInput = styled.input`
  appearance: none;
  flex-shrink: 0;
  display: grid;
  place-items: center;
  width: 16px;
  height: 16px;
  margin: 0;
  background-color: #fff;
  border: 1px solid #333;
  border-radius: ${({ type }) => type === "radio" ? "50%" : "0"};
  &:disabled {
    border-color: #c4c4c4;
  }
  &[type="radio"]:checked::before {
    content: "";
    width: 10px;
    height: 10px;
    border-radius: 50%;
    background-color: #333;
  }
  &[type="checkbox"]:checked::before {
    content: "";
    width: 10px;
    height: 5px;
    border: solid #333;
    border-width: 0 0 2px 2px;
    transform: translateY(-2px) rotate(-45deg);
  }
  &:disabled:checked::before {
    border-color: #c4c4c4;
  }
  &[type="radio"]:disabled:checked::before {
    background-color: #c4c4c4;
  }
`
const ChoiceGrid = styled.div`
  display: grid;
  grid-template-columns: ${({ $columns }) => $columns};
  margin-top: ${({ $top }) => $top}px;
  padding-left: ${({ $left = 22 }) => $left}px;
`
const CornerRow = styled.div`
  display: flex;
  padding: 1px 0 0 8px;
`
const CornerList = styled.div`
  width: 120px;
  ${ChoiceLabel} {
    height: 23px;
  }
`
const Diagram = styled.svg`
  width: 92px;
  height: 92px;
  background-color: #fff;
`
const ScaleRow = styled.div`
  display: flex;
  padding: 4px 18px 0 15px;
  label {
    flex: 1;
  }
`
const TextInput = styled.input`
  width: 122px;
  height: 26px;
  padding: 0 2px 4px;
  border: 1px solid #7a7a7a;
  background-color: #fff;
  font-family: "Liberation Mono", monospace;
  font-size: 13px;
`
const TypeGrid = styled.div`
  display: grid;
  grid-template-columns: 86px 40px 86px 18px;
  grid-auto-rows: 26px;
  align-items: center;
  padding: 1px 0 0 15px;
`
const VScroll = styled.div`
  display: flex;
  flex-direction: column;
  align-items: center;
  gap: 6px;
  width: 19px;
  padding: 6px 0;
`
const VTrack = styled.div`
  flex: 1;
  width: 100%;
`
const Thumb = styled.div`
  background-color: #cdcdcd;
  width: ${({ $horizontal, $size }) => $horizontal ? $size : "100%"};
  height: ${({ $horizontal, $size }) => $horizontal ? "19px" : $size};
`
const HScroll = styled.div`
  display: flex;
  align-items: center;
  gap: 6px;
  padding: 0 7px 0 4px;
  > div {
    margin-right: 10px;
  }
`
const BottomTabs = styled.div`
  display: flex;
  height: 21px;
  background: linear-gradient(#625f5e, #4b4948);
`
const BottomTab = styled.button`
  padding: 2px 5px 0;
  margin-right: 2px;
  line-height: 19px;
  color: ${({ $active }) => $active ? "#000" : "#f2f2f2"};
  background-color: ${({ $active }) => $active ? "#f4f7f7" : "transparent"};
  border-right: ${({ $active }) => $active ? "1px solid #111" : "0"};
`
const Main = styled.main`
  flex: 1;
  min-width: 0;
  display: flex;
  flex-direction: column;
`
const ViewFrame = styled.section`
  flex: 1;
  min-height: 0;
  display: flex;
  background: linear-gradient(#fff, #bfbfbf) padding-box, #fff;
  border: 3px solid #fff;
  box-shadow: inset 1px 1px #6e6b6c;
`
const Canvas = styled.div`
  position: relative;
  flex: 1;
`
const StageBar = styled.div`
  display: flex;
  align-items: center;
  padding: 12px 0 0 16px;
`
const StageSelect = styled.div`
  display: flex;
  align-items: center;
  width: 144px;
  height: 26px;
  margin-left: 7px;
  padding-right: 6px;
  background: linear-gradient(#b9bfc7, #9aa1aa) right / 18px 100% no-repeat;
  select {
    flex: 1;
    appearance: none;
    padding-left: 2px;
    border: 0;
    background: none;
    font-family: "Noto Sans", sans-serif;
    font-size: 14px;
  }
`
const StageDivider = styled.span`
  width: 1px;
  height: 18px;
  margin: 0 8px 0 6px;
  background-color: #333;
`
const Beam = styled.svg`
  position: absolute;
  top: calc(50% - 1px);
  left: 6.25%;
  width: 87.6%;
  height: 4px;
`
const CubeSvg = styled.svg`
  position: absolute;
  top: 12px;
  right: 11px;
  width: 70px;
  height: 70px;
`
const CutMark = styled.svg`
  position: absolute;
  bottom: 8px;
  left: 11px;
  width: 42px;
  height: 42px;
`
const LegendBox = styled.aside`
  width: 121px;
  display: flex;
  flex-direction: column;
  padding: 1px 6px 0 4px;
  border-left: 1px solid #000;
  font-family: "Noto Sans", "Noto Sans CJK SC", sans-serif;
  font-size: 11px;
  line-height: 12px;
  color: #000;
`
const Center = styled.div`
  text-align: center;
`
const Rule = styled.hr`
  width: 100%;
  flex-shrink: 0;
  height: 1px;
  margin: 0;
  border: 0;
  background-color: #000;
`
const LegendTitle = styled(Center)`
  line-height: 17px;
`
const LegendSub = styled(Center)`
  padding-top: 4px;
  line-height: 16px;
`
const Scale = styled.div`
  display: flex;
  gap: 8px;
  margin-top: 2px;
`
const ColorBar = styled.div`
  width: 22px;
  padding-top: 8px;
`
const Swatch = styled.div`
  height: 17px;
  background: linear-gradient(90deg, #000 1px, ${({ $color }) => $color} 1px 19px, #000 19px 20px, transparent 20px);
  border-top: 1px solid #000;
  &:last-child {
    height: 18px;
    border-bottom: 1px solid #000;
  }
`
const ScaleValues = styled.ul`
  margin: 0;
  padding: 0;
  list-style: none;
  line-height: 17px;
`
const Summary = styled.div`
  margin-top: auto;
  padding-bottom: 9px;
`
const FileInfo = styled.div`
  padding-top: 2px;
  line-height: 14px;
`
const DirectionTitle = styled(Center)`
  line-height: 14px;
`
const Direction = styled.div`
  display: flex;
  justify-content: space-between;
  margin-right: -1px;
  padding-bottom: 13px;
  svg {
    margin-top: 4px;
  }
`
const Axis = styled.div`
  line-height: 20px;
  height: 20px;
  color: ${({ $color }) => $color};
`
const DocBar = styled.nav`
  display: flex;
  height: 28px;
  flex-shrink: 0;
  padding: 0 5px 3px;
  background-color: #d2d2d2;
  border-top: 1px solid #aaa;
`
const ScrollArrow = styled.button`
  width: 14px;
  display: flex;
  align-items: center;
  margin-left: ${({ $end }) => $end ? "auto" : "0"};
`
const DocSlant = styled.span`
  width: 24px;
  background: linear-gradient(to top right, #d2d2d2 49%, #777 50%, #fff 52%);
`
const DocTab = styled.button`
  display: flex;
  align-items: center;
  gap: 8px;
  padding: ${({ $active }) => $active ? "0 9px 0 8px" : "0 6px 0 11px"};
  background-color: ${({ $active }) => $active ? "#fff" : "#d2d2d2"};
  border: solid #808080;
  border-width: 0 1px 1px 0;
  border-radius: 0 0 4px 4px;
  font-family: "Noto Sans", "Noto Sans CJK SC", sans-serif;
  font-weight: ${({ $active }) => $active ? "bold" : "normal"};
  color: #000;
`
const Info = styled.section`
  height: 128px;
  flex-shrink: 0;
  margin-top: 4px;
  display: flex;
  flex-direction: column;
`
const InfoBody = styled.div`
  flex: 1;
  min-height: 0;
  display: flex;
  background-color: #fffbf0;
  border: solid #8a8788;
  border-width: 3px 0 0 2px;
  border-right: 3px solid #f4f4f4;
`
const Output = styled.pre`
  flex: 1;
  min-width: 0;
  margin: 0;
  padding: 0 2px;
  font-family: "Open Sans", sans-serif;
  font-size: 20px;
  line-height: 24px;
  color: #000;
`
const InfoScroll = styled.div`
  width: 20px;
  padding: 6px 2px 0 0;
  display: flex;
  flex-direction: column;
  align-items: center;
  background-color: #f0f0f0;
`
const InfoThumb = styled.div`
  width: 18px;
  height: 22px;
  margin-top: 19px;
  background-color: #cdcdcd;
`
const SheetBar = styled.div`
  display: flex;
  height: 19px;
  padding: 0 0 0 1px;
  background-color: #f0f0f0;
  border-top: 2px solid #fff;
`
const NavButton = styled.button`
  width: 22px;
  padding: 4px 0 0 4px;
  overflow: hidden;
  border: solid #8a8a8a;
  border-width: 1px 2px 0 0;
`
const SheetTabs = styled.div`
  flex: 1;
  display: flex;
  padding-left: 2px;
  border-top: 1px solid #000;
  border-right: 1px solid #000;
`
const SheetTab = styled.button`
  position: relative;
  z-index: 0;
  padding: 0 9px;
  font-size: ${({ $active }) => $active ? 13 : 12}px;
  font-weight: ${({ $active }) => $active ? "bold" : "normal"};
  line-height: 17px;
  color: #000;
  &::before,
  &::after {
    content: "";
    position: absolute;
    z-index: -1;
    inset: 0 3px;
    border-left: 1px solid #000;
    transform: skewX(12deg);
  }
  &::after {
    border-left: 0;
    border-right: 1px solid #000;
    background-color: ${({ $active }) => $active ? "#fff" : "transparent"};
    transform: skewX(-12deg);
  }
`
const SheetScroll = styled.div`
  width: 524px;
  margin-left: 2px;
  display: flex;
  align-items: center;
  gap: 7px;
  padding-left: 4px;
  border-left: 2px solid #444;
`
const SheetThumb = styled.div`
  width: 21px;
  height: 100%;
  background-color: #cdcdcd;
`
const SideBar = styled.aside`
  width: 32px;
  margin: -1px 0 0 1px;
  padding-right: 1px;
`
const SideGroup = styled.div`
  display: flex;
  flex-direction: column;
  align-items: center;
  background-color: #d0d0d0;
  border-left: 1px solid #b4b4b4;
  border-radius: 2px;
`
const SideGrip = styled.span`
  width: 14px;
  height: 12px;
  background: repeating-linear-gradient(90deg, #333 0 2px, transparent 2px 4px) 0 5px / 100% 2px no-repeat;
  ${SideGroup}:first-child & {
    height: 10px;
    background-position: 0 4px;
  }
`
const SideButton = styled.button`
  display: flex;
  align-items: center;
  justify-content: center;
  width: 28px;
  height: 28px;
`
const SideSeparator = styled.span`
  width: 18px;
  height: 8px;
  background: linear-gradient(transparent 3px, #444 3px 4px, #fff 4px 5px, transparent 5px);
`
const Ime = styled.div`
  position: absolute;
  right: 6px;
  bottom: 6px;
  display: flex;
  align-items: center;
  height: 33px;
  background: linear-gradient(#fff, #fff) 20px 0 no-repeat;
  border: solid #b9cbe2;
  border-width: 1px 1px 1px 0;
  border-radius: 3px;
  svg:first-child {
    margin-top: -4px;
  }
`
const ImeButton = styled.button`
  width: 30px;
  height: 30px;
  display: flex;
  align-items: center;
  justify-content: center;
  font-family: "Noto Sans CJK SC", sans-serif;
  font-size: 18px;
  font-weight: bold;
  color: #0a6fdc;
  && svg {
    margin: 0;
  }
`
const Watermark = styled.div`
  position: absolute;
  right: 0;
  bottom: -6px;
  display: flex;
  flex-direction: column;
  color: rgba(160, 160, 160, 0.7);
  pointer-events: none;
  strong {
    font-family: "Liberation Serif", "Noto Sans CJK TC", serif;
    font-size: 32px;
    font-weight: normal;
    line-height: 40px;
  }
  span {
    font-family: "Liberation Serif", serif;
    font-size: 13px;
    font-weight: bold;
    line-height: 14px;
  }
`
